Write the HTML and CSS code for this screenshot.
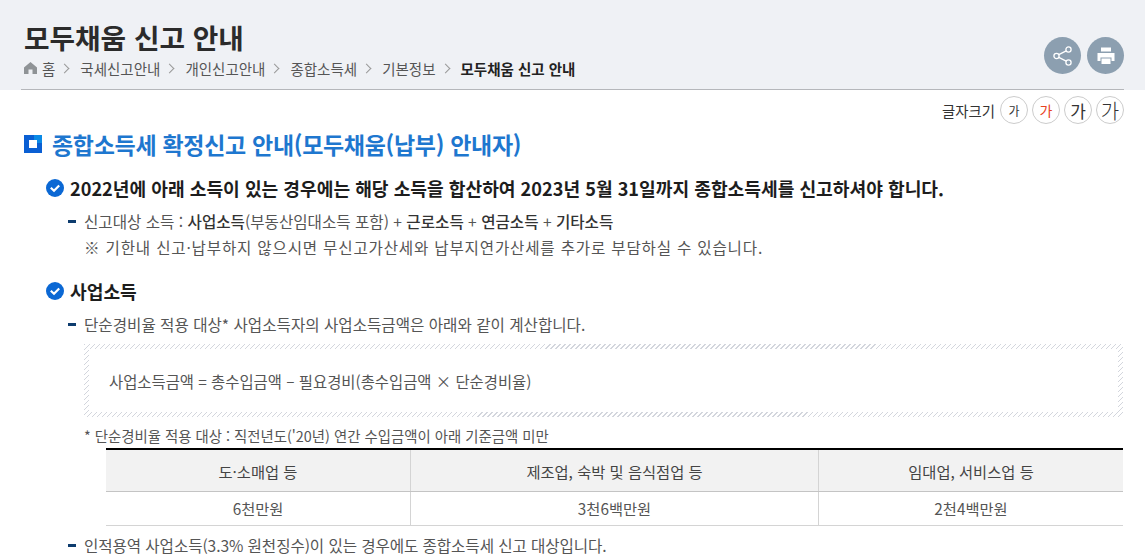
FILE: index.html
```html
<!DOCTYPE html>
<html lang="ko">
<head>
    <meta charset="UTF-8">
    <meta name="viewport" content="width=device-width, initial-scale=1.0">
    <title>모두채움 신고 안내</title>
    <link rel="stylesheet" href="styles.css">
</head>
<body>
    <header class="page-head">
        <div class="head-inner">
            <div>
                <h1>모두채움 신고 안내</h1>
                <nav class="crumbs">
                    <svg class="home-icon" width="13" height="12" viewBox="0 0 13 12"><path d="M6.500 0 L13 5.400 V12 H8.500 V7.500 H4.500 V12 H0 V5.400 Z" fill="#8f9396"/></svg>
                    <span>홈</span>
                    <i class="sep"></i><span>국세신고안내</span>
                    <i class="sep"></i><span>개인신고안내</span>
                    <i class="sep"></i><span>종합소득세</span>
                    <i class="sep"></i><span>기본정보</span>
                    <i class="sep"></i><strong>모두채움 신고 안내</strong>
                </nav>
            </div>
            <div class="head-btns">
                <button class="round-btn" aria-label="공유">
                    <svg width="22" height="22" viewBox="0 0 22 22" fill="none" stroke="#fff" stroke-width="1.300"><circle cx="16.500" cy="4.500" r="2.600"/><circle cx="4.500" cy="11" r="2.600"/><circle cx="16.500" cy="17.500" r="2.600"/><path d="M6.800 9.700 L14.200 5.800 M6.800 12.300 L14.200 16.200"/></svg>
                </button>
                <button class="round-btn" aria-label="인쇄">
                    <svg width="20" height="20" viewBox="0 0 20 20"><path d="M5 1.500 H15 V5.500 H5 Z M1.500 7 H18.500 V15 H15.500 V11.500 H4.500 V15 H1.500 Z M5.500 12.500 H14.500 V18 H5.500 Z" fill="#fff"/></svg>
                </button>
            </div>
        </div>
    </header>

    <div class="font-size-row">
        <span class="fs-label">글자크기</span>
        <span class="fs-btn fs-1">가</span>
        <span class="fs-btn fs-2">가</span>
        <span class="fs-btn fs-3">가</span>
        <span class="fs-btn fs-4">가</span>
    </div>

    <main class="content">
        <h2 class="title">
            <svg class="title-mark" width="18" height="18" viewBox="0 0 18 18"><rect width="18" height="18" fill="#0a5fd3"/><rect x="10" width="8" height="8" fill="#0a8ae6"/><rect x="5" y="5" width="8" height="8" fill="#fff"/></svg>
            종합소득세 확정신고 안내(모두채움(납부) 안내자)
        </h2>

        <h3 class="check-head first">
            <svg class="check" width="18" height="18" viewBox="0 0 18 18"><circle cx="9" cy="9" r="9" fill="#0b68d4"/><path d="M4.800 8.800 L8 11.800 L13.200 6.500" fill="none" stroke="#fff" stroke-width="2.200"/></svg>
            2022년에 아래 소득이 있는 경우에는 해당 소득을 합산하여 2023년 5월 31일까지 종합소득세를 신고하셔야 합니다.
        </h3>
        <div class="dash-item">
            <p>신고대상 소득 : <b>사업소득</b>(부동산임대소득 포함) + <b>근로소득</b> + <b>연금소득</b> + <b>기타소득</b></p>
            <p class="wide-line">※ 기한내 신고·납부하지 않으시면 무신고가산세와 납부지연가산세를 추가로 부담하실 수 있습니다.</p>
        </div>

        <h3 class="check-head second">
            <svg class="check" width="18" height="18" viewBox="0 0 18 18"><circle cx="9" cy="9" r="9" fill="#0b68d4"/><path d="M4.800 8.800 L8 11.800 L13.200 6.500" fill="none" stroke="#fff" stroke-width="2.200"/></svg>
            사업소득
        </h3>
        <div class="dash-item">
            <p>단순경비율 적용 대상* 사업소득자의 사업소득금액은 아래와 같이 계산합니다.</p>
        </div>

        <div class="hatch-box">
            <div class="hatch-inner">사업소득금액 = 총수입금액 – 필요경비(총수입금액 × 단순경비율)</div>
        </div>
        <p class="note">* 단순경비율 적용 대상 : 직전년도('20년) 연간 수입금액이 아래 기준금액 미만</p>

        <table class="amount-table">
            <thead>
                <tr><th>도·소매업 등</th><th>제조업, 숙박 및 음식점업 등</th><th>임대업, 서비스업 등</th></tr>
            </thead>
            <tbody>
                <tr><td>6천만원</td><td>3천6백만원</td><td>2천4백만원</td></tr>
            </tbody>
        </table>

        <div class="dash-item last">
            <p>인적용역 사업소득(3.3% 원천징수)이 있는 경우에도 종합소득세 신고 대상입니다.</p>
        </div>
    </main>
</body>
</html>
```

FILE: styles.css
```css
html, body {
    height: 560px;
    overflow: hidden;
}

body {
    font-family: "Noto Sans CJK KR", "Noto Sans", sans-serif;
    margin: 0;
    padding: 0;
    background-color: #fff;
    color: #444;
    font-size: 14px;
}

p, h1, h2, h3 {
    margin: 0;
}

.page-head {
    background-color: #eff1f5;
    height: 90px;
    padding: 0 21px;
    box-sizing: border-box;
}

.head-inner {
    display: flex;
    justify-content: space-between;
    height: 90px;
    box-sizing: border-box;
    padding: 19px 0 0 3px;
    border-bottom: 1px solid #b5b7bb;
}

h1 {
    font-size: 27.750px;
    line-height: 36px;
    font-weight: 700;
    color: #2b2b2b;
}

.crumbs {
    display: flex;
    align-items: center;
    margin-top: 5px;
    height: 16px;
    font-size: 14.500px;
    color: #555;
}

.crumbs strong {
    color: #222;
}

.home-icon {
    margin-right: 5px;
}

.sep {
    width: 6px;
    height: 6px;
    border-top: 1px solid #999;
    border-right: 1px solid #999;
    transform: rotate(45deg);
    margin: 0 12px 0 6px;
}

.head-btns {
    display: flex;
    gap: 6px;
    padding-top: 18px;
}

.round-btn {
    width: 37px;
    height: 37px;
    border: none;
    border-radius: 50%;
    padding: 0;
    background-color: #8c9fb0;
    display: flex;
    align-items: center;
    justify-content: center;
}

.font-size-row {
    display: flex;
    justify-content: flex-end;
    align-items: center;
    gap: 4px;
    height: 28px;
    margin-top: 6px;
    padding-right: 21px;
}

.fs-label {
    font-size: 14.400px;
    color: #333;
    margin-right: 1px;
}

.fs-btn {
    width: 26px;
    height: 26px;
    border: 1px solid #ccc;
    border-radius: 50%;
    display: flex;
    align-items: center;
    justify-content: center;
    color: #333;
}

.fs-1 { font-size: 12px; }
.fs-2 { font-size: 14px; color: #e8431f; }
.fs-3 { font-size: 17px; }
.fs-4 { font-size: 20px; font-weight: 300; }

.content {
    padding: 0 22px 0 24px;
}

.title {
    display: flex;
    align-items: center;
    margin-top: 5px;
    height: 30px;
    font-size: 23px;
    font-weight: 700;
    color: #1e77cf;
    letter-spacing: -0.3px;
}

.title-mark {
    margin-right: 10px;
}

.check-head {
    display: flex;
    align-items: center;
    gap: 6px;
    font-size: 18.150px;
    font-weight: 700;
    color: #1d1d1d;
    line-height: 26px;
    margin-left: 22px;
}

.check-head.first {
    margin-top: 16px;
}

.check-head.second {
    margin-top: 18px;
}

.dash-item {
    position: relative;
    margin: 7px 0 0 38px;
    padding-left: 22px;
    line-height: 26px;
    font-size: 15.600px;
    color: #555;
}

.dash-item::before {
    content: "";
    position: absolute;
    left: 6px;
    top: 12px;
    width: 8px;
    height: 3px;
    background-color: #0d3c6e;
}

.dash-item b {
    font-weight: 500;
    color: #333;
}

.dash-item .wide-line {
    letter-spacing: 0.8px;
}

.hatch-box {
    margin: 7px 0 0 60px;
    padding: 5px;
    height: 73px;
    box-sizing: border-box;
    background: repeating-linear-gradient(135deg, #d3d6dd 0 1px, #fff 1px 3.540px);
}

.hatch-inner {
    height: 100%;
    background-color: #fff;
    display: flex;
    align-items: center;
    padding-left: 20px;
    font-size: 15.400px;
    color: #555;
}

.note {
    margin: 9px 0 0 60px;
    font-size: 14.400px;
    line-height: 20px;
    color: #555;
}

.amount-table {
    width: 1017px;
    margin: 2px 0 0 82px;
    border-collapse: collapse;
    border-top: 2px solid #000;
    table-layout: fixed;
    font-size: 15.300px;
}

.amount-table th {
    background-color: #f2f2f2;
    font-weight: 400;
    color: #444;
    height: 41px;
    padding: 0;
    border-bottom: 1px solid #c4c4c4;
    border-left: 1px solid #d4d4d4;
}

.amount-table td {
    text-align: center;
    height: 31px;
    padding: 0 0 2px;
    color: #555;
    border-bottom: 1px solid #d4d4d4;
    border-left: 1px solid #d4d4d4;
}

.amount-table th:first-child,
.amount-table td:first-child {
    border-left: none;
    width: 304px;
}

.amount-table th:nth-child(2),
.amount-table td:nth-child(2) {
    width: 407px;
}

.dash-item.last {
    margin-top: 6px;
    letter-spacing: -0.08px;
}
```
